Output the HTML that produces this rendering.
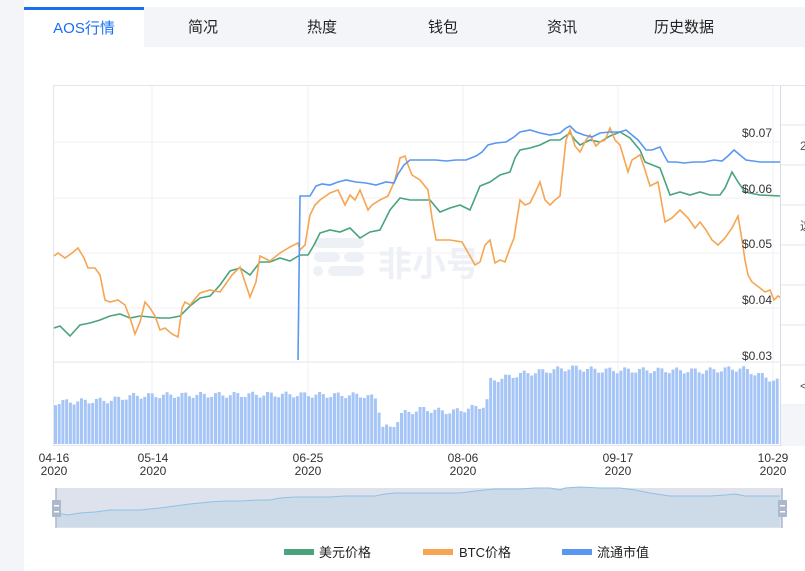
<!DOCTYPE html>
<html><head><meta charset="utf-8"><style>
html,body{margin:0;padding:0;width:805px;height:571px;overflow:hidden;background:#f4f5f9;font-family:"Liberation Sans","Noto Sans CJK SC",sans-serif;}
#main{position:absolute;left:24px;top:0;width:781px;height:571px;background:#fff;}
#tabs{position:absolute;left:24px;top:7px;width:781px;height:40px;background:#f4f5f9;}
.tab{position:absolute;top:0;height:40px;line-height:42px;font-size:15px;color:#222;text-align:center;}
.tab.act{background:#fff;color:#1a6ff0;border-top:3px solid #1a6ff0;height:37px;line-height:37px;}
svg{position:absolute;left:0;top:0}
</style></head><body>
<div id="main"></div>
<div id="tabs">
<div class="tab act" style="left:0;width:120px">AOS行情</div>
<div class="tab" style="left:146px;width:66px">简况</div>
<div class="tab" style="left:265px;width:66px">热度</div>
<div class="tab" style="left:386px;width:66px">钱包</div>
<div class="tab" style="left:505px;width:66px">资讯</div>
<div class="tab" style="left:620px;width:80px">历史数据</div>
</div>
<svg width="805" height="571" id="s" font-family="Liberation Sans, Noto Sans CJK SC, sans-serif">
<rect x="53.5" y="85.5" width="760" height="360" fill="none" stroke="#e3e5ee"/>
<g stroke="#f0f2f6" stroke-width="1">
<line x1="152" y1="86" x2="152" y2="445"/><line x1="308" y1="86" x2="308" y2="445"/>
<line x1="463" y1="86" x2="463" y2="445"/><line x1="618" y1="86" x2="618" y2="445"/>
<line x1="773" y1="86" x2="773" y2="445"/>
<line x1="54" y1="142" x2="780" y2="142"/><line x1="54" y1="198" x2="780" y2="198"/>
<line x1="54" y1="253" x2="780" y2="253"/><line x1="54" y1="308" x2="780" y2="308"/>
</g>
<line x1="54" y1="362" x2="780" y2="362" stroke="#e3e5ee"/>
<g id="bars" fill="#a6c5f7"></g>
<g fill="#edf0f5">
<rect x="314" y="238" width="50" height="10" rx="5"/><rect x="314" y="252" width="26" height="10" rx="5"/><rect x="344" y="252" width="20" height="10" rx="5"/><circle cx="318" cy="271" r="5"/><rect x="328" y="266" width="36" height="10" rx="5"/>
</g>
<text x="378" y="276" font-size="34" font-weight="bold" fill="#edf0f5">非小号</text>
<polyline fill="none" stroke="#4aa37d" stroke-width="1.6" points="54,328 60,326 70,336 80,325 90,323 100,320 110,316 120,314 130,318 140,316 160,318 170,318 180,316 190,306 200,298 210,296 220,285 230,271 240,268 250,275 260,262 270,262 280,258 290,261 300,255 308,255 314,245 320,233 330,230 340,232 350,228 360,238 370,232 380,230 390,210 400,198 410,200 420,200 430,200 440,212 450,208 460,205 470,210 480,186 490,182 500,175 510,172 515,158 520,150 530,148 540,145 550,140 560,140 570,133 575,140 580,145 590,140 600,142 610,136 620,132 630,138 640,150 645,162 660,168 670,195 680,192 690,195 700,192 710,195 720,195 725,188 732,172 738,182 745,192 760,195 780,196"/>
<polyline fill="none" stroke="#f6a552" stroke-width="1.6" points="54,256 58,253 65,258 72,253 78,248 84,258 88,268 95,268 100,275 105,300 110,302 118,300 125,305 130,318 135,334 140,322 145,302 150,308 155,316 160,330 165,328 172,334 178,337 182,308 185,302 190,305 200,293 210,290 220,292 225,285 232,275 240,267 245,282 250,297 256,282 260,256 270,261 280,253 290,247 298,243 300,250 305,245 310,215 315,205 320,200 330,193 338,190 345,205 350,195 355,200 360,190 368,210 372,205 380,200 388,196 395,180 400,158 405,156 408,165 412,175 420,180 428,190 432,218 436,240 443,240 450,240 462,242 470,256 475,265 480,262 485,245 490,240 495,263 500,260 505,262 510,248 514,238 520,200 525,205 530,203 535,193 540,182 545,200 550,205 555,200 560,196 566,140 570,130 575,146 580,152 586,140 590,135 596,146 600,142 605,140 610,128 615,140 620,145 628,172 632,160 640,155 645,170 650,186 658,182 665,222 672,218 680,210 688,218 695,228 700,222 706,230 712,240 718,245 725,238 732,228 738,216 742,240 745,260 748,275 752,282 760,288 765,292 770,290 774,300 778,296 782,298"/>
<polyline fill="none" stroke="#5a97f0" stroke-width="1.6" points="298,360 300,196 310,196 316,186 322,184 330,185 338,182 346,180 356,182 366,183 376,185 386,182 394,183 398,174 404,165 410,160 418,160 426,160 436,160 446,161 456,160 466,160 476,156 482,152 488,145 496,143 506,142 514,137 520,132 530,130 540,133 550,135 560,133 566,128 570,126 576,132 584,135 592,137 600,133 610,132 620,132 626,130 632,135 638,140 646,150 652,150 660,147 664,155 668,162 676,162 684,163 694,162 704,162 714,160 722,161 728,156 734,150 740,155 746,160 760,162 780,162"/>
<g font-size="12" fill="#333">
<text x="742" y="137">$0.07</text><text x="742" y="193">$0.06</text><text x="742" y="248">$0.05</text><text x="742" y="304">$0.04</text><text x="742" y="360">$0.03</text>
</g>
<rect x="780" y="86" width="25" height="360" fill="#fff"/>
<line x1="780.5" y1="86" x2="780.5" y2="446" stroke="#d6dbe6"/>
<g stroke="#e3e5ee"><line x1="781" y1="125" x2="805" y2="125"/><line x1="781" y1="165" x2="805" y2="165"/><line x1="781" y1="205" x2="805" y2="205"/><line x1="781" y1="245" x2="805" y2="245"/><line x1="781" y1="285" x2="805" y2="285"/><line x1="781" y1="325" x2="805" y2="325"/><line x1="781" y1="365" x2="805" y2="365"/><line x1="781" y1="405" x2="805" y2="405"/></g>
<rect x="781" y="406" width="24" height="40" fill="#f4f5f9"/>
<g font-size="12" fill="#555"><text x="800" y="150">2</text><text x="800" y="230">这</text><text x="800" y="390">&lt;</text></g>
<g font-size="12" fill="#333" text-anchor="middle">
<text x="54" y="462">04-16</text><text x="54" y="475">2020</text>
<text x="153" y="462">05-14</text><text x="153" y="475">2020</text>
<text x="308" y="462">06-25</text><text x="308" y="475">2020</text>
<text x="463" y="462">08-06</text><text x="463" y="475">2020</text>
<text x="618" y="462">09-17</text><text x="618" y="475">2020</text>
<text x="773" y="462">10-29</text><text x="773" y="475">2020</text>
</g>
<rect x="56" y="488" width="726" height="40" fill="#dde2ec"/>
<polygon fill="#cddbe9" points="57,527 57,513 68,515 80,513 95,512 110,510 125,510 140,510 160,508 175,506 190,504 210,502 225,501 240,501 260,500 270,500 280,498 295,497 315,497 330,497 345,496 360,496 375,496 385,494 395,493 410,493 425,493 440,493 450,493 460,493 475,491 485,490 495,489 505,489 520,489 535,488 550,488 560,490 565,488 580,487 600,488 620,488 635,490 650,493 670,496 690,496 710,496 725,495 735,494 745,496 765,496 780,496 780,527"/>
<polyline fill="none" stroke="#8fc1e6" stroke-width="1" points="57,513 68,515 80,513 95,512 110,510 125,510 140,510 160,508 175,506 190,504 210,502 225,501 240,501 260,500 270,500 280,498 295,497 315,497 330,497 345,496 360,496 375,496 385,494 395,493 410,493 425,493 440,493 450,493 460,493 475,491 485,490 495,489 505,489 520,489 535,488 550,488 560,490 565,488 580,487 600,488 620,488 635,490 650,493 670,496 690,496 710,496 725,495 735,494 745,496 765,496 780,496"/>
<line x1="56" y1="488" x2="56" y2="528" stroke="#acb8cb" stroke-width="1.5"/><line x1="782" y1="488" x2="782" y2="528" stroke="#acb8cb" stroke-width="1.5"/>
<rect x="52" y="500" width="9" height="17" fill="#acb8cb" rx="1"/><rect x="778" y="500" width="9" height="17" fill="#acb8cb" rx="1"/>
<g fill="#fff"><rect x="54" y="505" width="5" height="1.5"/><rect x="54" y="511" width="5" height="1.5"/><rect x="780" y="505" width="5" height="1.5"/><rect x="780" y="511" width="5" height="1.5"/></g>
<rect x="284" y="549" width="30" height="6" fill="#4aa37d"/><text x="319" y="557" font-size="13" fill="#222">美元价格</text>
<rect x="423" y="549" width="30" height="6" fill="#f6a552"/><text x="459" y="557" font-size="13" fill="#222">BTC价格</text>
<rect x="562" y="549" width="30" height="6" fill="#5a97f0"/><text x="597" y="557" font-size="13" fill="#222">流通市值</text>
</svg>
<script>
(function(){
var env=[[54,405],[110,404],[130,400],[200,398],[290,394],[360,392],[376,395],[380,422],[390,425],[400,410],[420,405],[450,408],[485,402],[488,378],[520,372],[570,368],[600,372],[700,375],[740,372],[778,385]];
function envTop(x){for(var i=0;i<env.length-1;i++){if(x>=env[i][0]&&x<=env[i+1][0]){var t=(x-env[i][0])/(env[i+1][0]-env[i][0]);return env[i][1]+t*(env[i+1][1]-env[i][1]);}}return 385;}
var g=document.getElementById('bars');var ns='http://www.w3.org/2000/svg';
for(var x=54;x<778;x+=3.72){var y=envTop(x)+Math.sin(x*1.7)*4+Math.sin(x*0.37)*3;var r=document.createElementNS(ns,'rect');r.setAttribute('x',x.toFixed(1));r.setAttribute('y',y.toFixed(1));r.setAttribute('width','3');r.setAttribute('height',(444-y).toFixed(1));g.appendChild(r);}
})();
</script>
</body></html>
